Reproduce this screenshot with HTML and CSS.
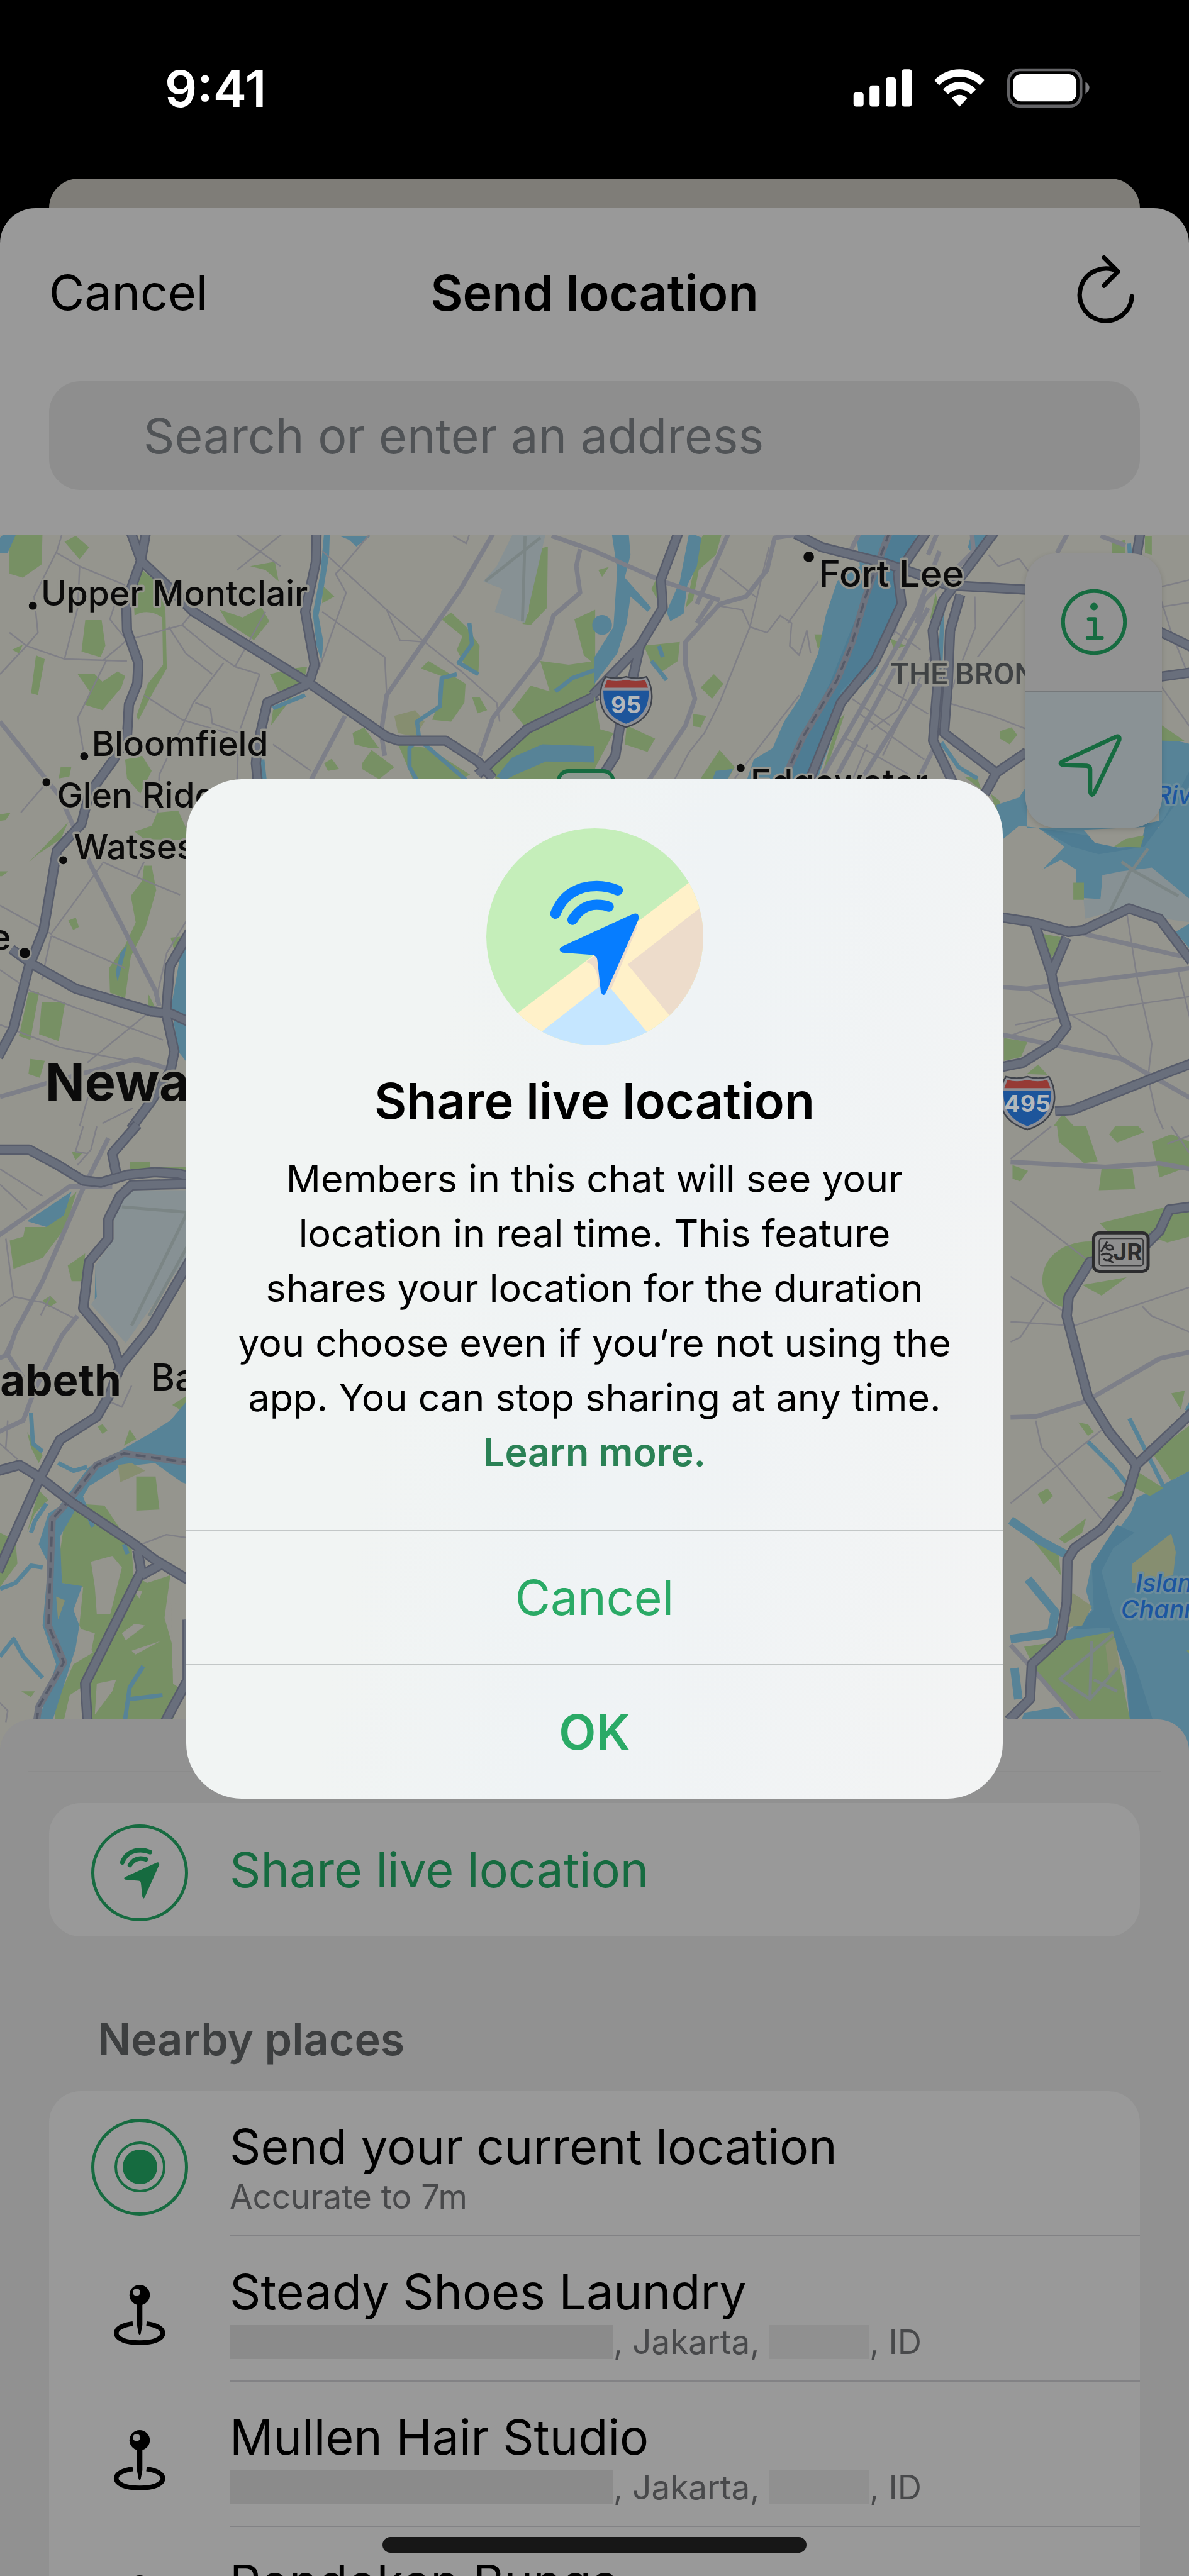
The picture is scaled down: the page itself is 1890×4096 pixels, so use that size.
FILE: index.html
```
<!DOCTYPE html>
<html lang="en">
<head>
  <meta charset="utf-8">
  <title>Send location</title>
  <link rel="stylesheet" href="styles.css">
</head>
<body>
  <!-- shared shapes -->
  <svg class="sprite" aria-hidden="true">
    <symbol id="live" viewBox="320 360 440 570">
      <path fill="none" stroke="currentColor" stroke-width="50" stroke-linecap="round" d="M350 527C385 435 460 393 550 393C590 393 625 402 652 414M433 557C465 505 505 484 550 484C575 484 595 487 608 493"/>
      <path fill="currentColor" d="M378 688L728 528Q756 520 754 552L597 905Q583 937 570 905L553 750Q548 728 525 727L385 716Q360 706 378 688Z"/>
    </symbol>
    <symbol id="pin" viewBox="160 868 254 297">
      <circle cx="287" cy="920" r="49"/>
      <circle cx="272" cy="907" r="18" fill="#999"/>
      <path d="M274 960H300V1065L292 1106Q287 1118 282 1106L274 1065Z"/>
      <path fill="none" stroke="#000" stroke-width="23" d="M254 1058C205 1064 174 1082 174 1104C174 1132 222 1150 287 1150C352 1150 399 1132 399 1104C399 1082 368 1064 320 1058"/>
    </symbol>
    <symbol id="shield" viewBox="0 0 144 140">
      <path fill="#8d8f95" stroke="#3f434b" stroke-width="4" d="M18 4Q45 12 72 4Q99 12 126 4Q142 30 140 62Q136 118 72 137Q8 118 4 62Q2 30 18 4Z"/>
      <path fill="#963a35" d="M22 12Q45 19 72 12Q99 19 122 12L130 33H14Z"/>
      <path fill="#1d559b" d="M12 40H132Q134 108 72 128Q10 108 12 40Z"/>
    </symbol>
  </svg>

  <header class="status">
    <time>9:41</time>
    <svg class="status-icons" viewBox="50 90 1156 196" aria-hidden="true">
      <g fill="#fff">
        <rect x="53" y="209" width="49" height="69" rx="13"/>
        <rect x="131" y="175" width="49" height="103" rx="13"/>
        <rect x="210" y="136" width="49" height="142" rx="13"/>
        <rect x="288" y="97" width="49" height="181" rx="13"/>
        <path d="M446 150Q500 97 569 97Q638 97 691 150L668 174Q625 133 569 133Q513 133 470 174Z"/>
        <path d="M489 194Q523 158 569 158Q615 158 649 194L625 219Q601 194 569 194Q537 194 513 219Z"/>
        <path d="M532 238Q548 221 569 221Q590 221 606 238L569 278Z"/>
        <rect x="830" y="121" width="308" height="132" rx="38"/>
      </g>
      <rect x="808" y="99" width="352" height="177" rx="54" fill="none" stroke="#636366" stroke-width="14"/>
      <path fill="#7c7c7f" d="M1182 157Q1201 168 1201 186Q1201 204 1182 216Z"/>
    </svg>
  </header>

  <div class="behind"></div>
  <main class="sheet">
    <div class="bar">
      <button class="bar-cancel">Cancel</button>
      <h1>Send location</h1>
      <button class="bar-refresh" aria-label="Refresh">
        <svg viewBox="1130 985 312 350"><path fill="none" stroke="#000" stroke-width="22" stroke-linecap="round" stroke-linejoin="round" d="M1403 1190A127 127 0 1 1 1335 1069M1267 1001L1335 1069L1267 1138"/></svg>
      </button>
    </div>
    <input class="search" type="text" placeholder="Search or enter an address" aria-label="Search or enter an address">

    <section class="map">
      <svg class="map-art" viewBox="0 865 1920 1970">
        <defs>
          <g id="hwy-nw">
            <path d="M345 0L372 75L333 185L335 260L365 345L362 400L340 455L335 540L300 600L235 690L215 770L150 840L115 1050L75 1150L35 1310L-5 1385"/>
            <path d="M385 0L372 75L440 140L510 210L810 395L1020 540L1050 550L1175 550L1260 605L1300 650"/>
            <path d="M835 0L833 80L805 210L830 350L815 400L705 450L680 560L675 610L680 660"/>
            <path d="M1260 640L1390 520L1575 430"/>
            <path d="M30 1100L85 1140L200 1205L400 1265L450 1270L500 1293"/>
            <path d="M500 1055L448 1145L438 1270L460 1370L450 1420L400 1500L345 1575"/>
          </g>
          <g id="hwy-ne">
            <path d="M222 0L175 125L180 200L120 300L-5 430M120 300L100 390M68 505L55 590L20 645"/>
            <path d="M530 5L600 40L760 80L850 110L930 140L1140 152"/>
            <path d="M875 0L800 110L810 190L740 340L650 450L565 660"/>
            <path d="M1055 0L920 180L892 260L905 400L893 550L945 660M965 165L938 260L932 400L922 530L1060 635L1140 580M1060 635L1030 690"/>
            <path d="M1440 0L1430 60M1490 262L1575 303M1490 382L1575 370"/>
            <path d="M1070 1016L1160 1030L1250 1055L1290 1050L1410 993L1490 1020L1575 1133"/>
            <path d="M1160 1030L1205 1165L1215 1215L1245 1305L1210 1350L1130 1400L1070 1412M1245 1070L1205 1165"/>
            <path d="M1215 1528L1260 1525L1500 1430L1575 1402"/>
          </g>
          <g id="hwy-sw">
            <path d="M-5 60L75 60L150 100L215 140L260 145L330 125L400 118L460 122L500 132"/>
            <path d="M300 120L290 70L355 -5M500 148L340 152L310 180L280 240L280 290L230 350L215 470L290 560L310 620L390 520L500 330"/>
            <path d="M310 620L285 690L250 750L155 810L100 915L-5 1150"/>
            <path d="M-5 890L50 875L100 905L190 975L340 1075L400 1120L500 1180"/>
            <path d="M355 1095L365 1150L220 1440L230 1600M420 1130L365 1160M485 1275L485 1430L430 1532L400 1600"/>
          </g>
          <g id="hwy-se">
            <path d="M1575 203L1485 215L1460 270L1400 330L1280 350L1225 440L1220 490L1275 700L1330 790L1400 875L1575 710"/>
            <path d="M1400 875L1375 960L1310 1040L1240 1090L1222 1120L1220 1230L1205 1320L1130 1390L1125 1480L1070 1535"/>
          </g>
        </defs>
        <rect class="land" y="865" width="1920" height="1970"/>

        <!-- Montclair, Bloomfield, Newark -->
        <g transform="translate(0 860) scale(.6122)">
          <g class="park">
            <path d="M25 0H112L110 85L60 120L25 110ZM170 25L200 10L235 40L210 72ZM375 100L435 150L440 360L405 420L365 497L360 485L390 400L430 350L428 225Q390 200 355 220L350 140Z"/>
            <path d="M225 232L268 232L278 300L265 330L215 315ZM95 325L118 335L100 430L82 425ZM205 375L250 375L270 395L310 368L330 380L320 410L270 470L222 455L240 425ZM32 310L60 297L50 320Z"/>
            <path d="M660 90L725 78L735 130L700 100ZM580 205L640 225L690 198L710 235L670 285L600 240ZM850 140L882 170L850 188ZM712 375L770 360L810 355L800 400L735 420ZM720 470L775 430L715 510Z"/>
            <path d="M1165 230L1190 212L1230 250L1265 300L1262 370L1225 350L1205 310L1220 275ZM1110 360L1130 340L1180 370L1228 400L1225 450L1190 500L1140 495L1165 430L1165 380ZM1245 435L1265 435L1285 470L1260 478Z"/>
            <path d="M930 530L960 515L1000 570L975 570L935 560ZM955 610L980 575L1040 620L1000 652L955 625ZM1050 560L1130 570L1240 640L1210 655H1090ZM855 610L875 598L895 625L865 630Z"/>
            <path d="M1400 50L1445 38L1443 200L1400 245L1378 242L1395 210ZM1515 230L1570 205V350L1540 325ZM1425 340L1500 350L1570 340V655H1310L1290 620L1390 520L1350 470L1400 405L1450 420Z"/>
            <path d="M160 620H188L183 645L155 650ZM330 600L375 590L400 630L370 690L335 650ZM415 740L470 735L495 790V812L380 810L355 790L400 775ZM180 765L75 872L100 850L160 810Z"/>
            <path d="M380 880H400L412 945L385 1040L345 1120L330 1230L290 1215L288 1150L330 1090L358 1030L345 960L375 920ZM180 1025L200 1017L208 1042L193 1050ZM110 1240L172 1240L155 1343L103 1325ZM75 1215H103L80 1340L50 1330ZM80 1390L118 1395L105 1440L75 1430Z"/>
            <path d="M450 1070L490 1066L460 1105ZM392 1220L415 1265L390 1250ZM0 745L28 740L15 760L0 762ZM0 895H22L5 908H0Z"/>
          </g>
          <path class="sand" d="M1040 485L1095 470L1120 500L1095 540L1050 530Z"/>
          <g class="water">
            <path d="M0 15L15 0H45L20 55H0ZM855 0H870L868 60L850 170L840 220L853 290L848 340L835 300L825 215L845 110ZM895 10H978L940 38L920 20ZM1310 645L1350 595L1430 560L1575 565V608L1440 605L1360 640L1330 655ZM495 1060V1402L470 1370L452 1250L475 1120ZM335 1090L320 1150L310 1185L305 1160L318 1110Z"/>
          </g>
          <path class="creek" d="M1238 240L1245 295L1210 345L1262 375M1205 375L1165 385L1160 460L1100 500L1105 540L1080 570L1080 620L1100 655M1120 560L1230 655M1465 420L1510 385L1575 362M692 600L698 655M805 430L720 465"/>
          <path class="airport" d="M1355 0H1440L1385 240L1305 210L1325 150L1275 130L1310 90Z"/>
          <path class="runway" d="M1385 10L1378 235M1280 130L1425 15"/>
          <g class="street">
            <path d="M150 50L90 170L100 265L70 300L0 375M25 265L70 300L170 335L335 340M170 335L205 200L210 90L150 55M210 90L330 140M270 340L335 285L480 245L510 210M280 340L205 490L222 590M615 0L740 90M625 100L750 0"/>
            <path d="M480 245L570 320L620 355L685 375L630 530L625 655M700 210L620 355M590 345L510 450L420 640L415 740M445 250L490 320L560 375M380 430L480 495L600 530M515 450L555 465L560 505L630 530M850 50L900 95L1020 205L1120 290L1220 370L1310 450L1318 500"/>
            <path d="M900 95L885 110L913 160L840 365M850 210L1015 330L1020 430M1020 205L1055 285L1120 290M900 95L980 0M720 560L820 630M165 0L150 50M290 230L320 140M290 230L330 280M1195 10L1230 30L1240 0"/>
            <path d="M135 1065L330 1150M0 985L135 1060L270 875M0 1155L80 1210L430 1340M0 1300L160 1360L390 1405M230 1400L420 1245M270 870L360 910L475 957M55 740L115 670M210 1568L235 1480L280 1465M270 1560L350 1520M380 870L360 910M340 710L410 740M135 1065L110 1180M495 1020L440 1110L410 1240"/>
          </g>
          <path class="road" d="M1303 0L1215 150L1020 430L1005 530L1015 590M1455 10L1575 52M1530 45L1520 90L1530 160L1460 220L1425 330L1300 490L1265 590M910 485L820 655M0 500L120 650L160 700L240 880L410 1210L420 1250M0 1490L120 1455L360 1390L440 1415"/>
          <use href="#hwy-nw" class="hwy-edge"/>
          <use href="#hwy-nw" class="hwy"/>
        </g>

        <!-- Hudson, Manhattan, Bronx -->
        <g transform="translate(960 860) scale(.6122)">
          <g class="park">
            <path d="M280 20L290 0H337L320 60L275 100L260 180L240 200ZM170 110L190 220L150 150ZM130 300L225 290L220 340L175 370L150 345ZM85 510L160 545L140 580L80 560ZM0 430L15 520L50 530L0 625ZM280 410L315 375L340 400L310 440ZM260 480L295 485L280 515L260 512ZM280 650L330 575L370 620L350 655ZM1070 525L1100 515L1115 535L1095 560L1070 545ZM580 270H608L590 310ZM10 100L38 92L20 118Z"/>
            <path d="M1365 30L1400 20V55H1365ZM1452 10H1470V60L1452 55ZM780 280L820 300L790 310ZM900 160L910 210L885 230ZM640 500L660 480L620 600L600 640ZM975 645L1010 650L1020 680ZM1045 690L1070 710L1065 750ZM1180 1060L1240 1070L1205 1125ZM1080 1335L1142 1345L1125 1385L1080 1395ZM1140 1430L1170 1405L1195 1432ZM1210 1568L1235 1535L1265 1568Z"/>
          </g>
          <g class="water">
            <path d="M690 0H880L800 100L815 200L740 370L660 450L585 660H400L420 600L470 570L500 500L540 440L590 320L610 220L640 130L700 90Z"/>
            <path d="M45 0H90L95 60L80 120L150 200L140 210L95 170L85 240L60 320L0 400V330L50 250L60 100ZM250 0L282 15L270 90L245 140L235 215L200 235L190 210L225 130Z"/>
            <circle cx="20" cy="245" r="26"/>
            <path d="M1140 670L1120 700L1060 720L1075 812L1120 775L1170 780L1240 830L1182 890L1230 865L1270 890L1270 965L1335 968L1340 905L1400 900L1575 985V560L1490 540V780L1140 780ZM1575 1030L1532 1055L1575 1105ZM995 0H1045L1000 60L985 40ZM320 630L365 625L350 655H310Z"/>
          </g>
          <path class="deep" d="M790 0H850L770 300L650 420L560 660H490L620 400L700 200ZM1170 780L1260 830L1330 850L1450 830L1575 660V620L1500 760L1300 800Z"/>
          <path class="creek" d="M918 200L912 360M915 555L960 620L1010 650M150 340L190 390M170 300L180 330M1410 30L1412 55"/>
          <path class="land" d="M1290 785L1452 778L1440 830L1380 832L1320 820Z"/>
          <path class="park" d="M1370 830L1400 810L1450 800L1440 832ZM1263 925H1291V970H1263ZM1490 505L1558 552L1490 550Z"/>
          <path class="airport" d="M1340 905L1390 895L1470 885L1575 972V1030L1500 1020L1410 985L1370 1000L1295 1020L1290 970L1335 968Z"/>
          <path class="runway" d="M1390 870L1420 890L1460 835M1360 1000L1415 890L1540 960"/>
          <g class="street">
            <path d="M330 95L430 175M460 40L410 250L455 265L490 220L520 240L515 300L540 325L560 260L570 320M410 250L330 450L290 530L250 580L210 655M330 195L390 205L410 250M540 430L370 650M590 130L510 240M700 480L870 600M655 540L830 640M750 400L880 480M790 260L860 310M680 440L780 510M720 560L680 655M820 180L790 270M850 350L800 470L730 520M900 300L760 590"/>
            <path d="M1003 170L1005 250L970 340L930 450L1050 485L1140 520M1130 180L1010 330M1490 165L1520 260L1575 400M1490 145L1575 125M1490 198L1575 185M1490 400L1575 520M1040 60L1065 90L1120 70L1150 110"/>
            <path d="M1405 1010L1430 1170L1470 1350L1460 1440L1480 1530L1500 1575M1110 1300L1400 1250L1575 1225M1540 1160L1575 1300M1150 1210L1350 1330L1400 1400M1080 1335L1230 1280"/>
          </g>
          <path class="road" d="M355 0L270 190M0 50L180 130L330 180M540 5L475 15L455 100L400 170L330 190L240 290L240 350L265 440L240 510L140 660M310 180L270 240M905 0L880 60M995 0L1000 50L870 180L850 240M910 50L850 210L600 645M880 200L630 660M860 400L700 660M700 0L670 60M1250 0L1220 55M1335 10L1400 35M900 560L850 660M1070 1200L1140 1205L1575 1150M1290 1060L1575 1125M1070 1325L1220 1355L1390 1390L1575 1495"/>
          <path class="ferry" d="M778 0L715 170L680 290L640 390L550 540L505 640"/>
          <path class="ferry-dash" d="M778 0L715 170L680 290L640 390L550 540L505 640"/>
          <use href="#hwy-ne" class="hwy-edge"/>
          <use href="#hwy-ne" class="hwy"/>
        </g>

        <!-- Elizabeth, Bayonne, Staten Island -->
        <g transform="translate(0 1820) scale(.625)">
          <path class="park" d="M165 200L198 168L170 260L110 340L35 368L25 295L60 285L65 260L120 260ZM175 360L220 328L215 400L185 400ZM185 65L212 70L195 87ZM335 92H388V110H335ZM415 105H480V120H415ZM110 450L130 438L147 455L127 467ZM70 790L110 850L100 870L80 830ZM352 905H402L412 990L352 993ZM445 720L492 690L470 735ZM320 825L335 782L352 808ZM252 775L265 770L278 785L265 795ZM100 940L125 965L90 1000L70 1050Z"/>
          <path class="park" d="M170 1000L200 975L270 980L340 1085L345 1160L380 1180L440 1160L425 1270L445 1340L447 1440L475 1460L420 1600H245L225 1440L180 1470L150 1600L140 1500L190 1390L240 1360L205 1290L215 1190L160 1180L155 1100ZM0 1050L40 1070L45 1130L0 1190ZM55 1460H90L80 1475Z"/>
          <path class="land" d="M235 1125L290 1110L315 1140L300 1200L285 1260L250 1260L245 1190ZM195 1295L245 1310L235 1360L200 1360ZM315 1310L348 1285L375 1290L325 1328ZM250 1440L300 1430L290 1460L245 1520ZM345 1200H368L360 1220ZM340 1355L415 1330L350 1365ZM442 1230L480 1240V1430L445 1400Z"/>
          <g class="water">
            <path d="M70 245L185 168L165 230L120 260ZM495 695L440 760L385 795L290 850L230 880L150 985L125 1000L100 1080L125 1130L110 1290L145 1390L80 1600H115L195 1350L205 1290L190 1250L212 1188L160 1180L155 1060L230 930L310 880L400 870L470 920L495 928Z"/>
          </g>
          <path class="sand" d="M305 875L340 870L375 890L310 920ZM145 1215L168 1225L150 1275Z"/>
          <path class="creek" d="M0 1370L35 1325L60 1370L110 1425M0 1195L40 1180L80 1135L110 1140M80 740L85 820L110 840M150 870L190 890L225 880M250 465L252 370L270 350M315 1590L335 1450L370 1395M335 1480L420 1470M120 975L90 1020L80 1050M210 960L240 1035M320 1080L330 1105"/>
          <path class="airport" d="M310 165H495V320L325 560L235 460L250 440L245 360L295 290L295 200Z"/>
          <path class="runway" d="M485 220L340 515M495 290L385 490M315 208L485 222"/>
          <path class="street" d="M215 0L195 65L225 70M0 110L110 180M15 290L35 440L0 465M35 440L110 455L200 500M365 1080L430 1055L495 1065M0 150L70 215M340 670L315 725L280 710M40 530L10 590M250 0L235 60L200 100M20 760L15 830M0 820L45 860M130 440L105 488M0 1490L20 1510L15 1540"/>
          <path class="road" d="M-5 283L180 155L290 155M280 30L210 170L110 400L40 530L20 590L60 650M200 490L160 540L90 680L60 760L-5 790M-5 600L20 590"/>
          <path class="ferry" d="M495 870L320 845L250 875L180 965L135 1015L125 1290L165 1385L100 1500L85 1600"/>
          <path class="ferry-dash" d="M495 870L320 845L250 875L180 965L135 1015L125 1290L165 1385L100 1500L85 1600"/>
          <use href="#hwy-sw" class="hwy-edge"/>
          <use href="#hwy-sw" class="hwy"/>
        </g>

        <!-- Queens, Jamaica Bay -->
        <g transform="translate(960 1820) scale(.625)">
          <path class="water" d="M1575 870L1490 915L1400 960L1385 1000L1340 1060L1285 1130L1270 1200L1285 1250L1240 1290L1180 1350L1340 1305L1370 1400L1390 1620H1575ZM1110 1515L1200 1500L1240 1540V1600H1080Z"/>
          <path class="deep" d="M1350 1030L1395 1050L1340 1090L1310 1150L1340 1260L1400 1400L1470 1620H1390L1375 1420L1330 1295L1240 1300L1290 1250L1285 1130Z"/>
          <g class="park">
            <path d="M1195 0H1270L1300 90L1265 95L1200 40ZM1330 20L1345 0H1405L1420 15L1350 42ZM1440 40L1490 20L1540 40L1545 100L1460 132ZM1310 110H1390L1397 162L1303 165ZM1080 100L1120 115L1100 142L1080 135ZM1305 250L1470 210L1575 215V275L1480 300L1440 285L1330 275ZM1300 298C1200 290 1150 350 1158 410C1165 450 1200 470 1215 465L1230 420L1280 350ZM1260 410L1375 390L1310 437ZM1250 765L1275 770L1290 790L1275 800ZM1145 950L1170 935L1185 955L1160 977ZM1490 690L1525 683L1515 732ZM1575 745V870L1490 915L1445 850L1420 860ZM1400 890L1470 935L1435 955L1390 930ZM1200 1065L1270 1013L1260 1050L1215 1078ZM1325 960L1365 940V972ZM1110 1345L1210 1330L1340 1305L1355 1390L1397 1600H1290L1240 1532L1150 1430ZM1530 1355L1575 1335V1405ZM1085 1010L1200 1110L1205 1160Z"/>
          </g>
          <path class="sand" d="M1390 1130L1490 1052L1502 1100L1495 1160L1420 1180L1388 1180ZM1235 1205L1285 1240L1260 1290L1215 1295ZM1320 1340L1345 1320L1358 1400L1330 1420Z"/>
          <path class="creek wide" d="M1075 1018L1150 1070L1225 1110M1120 1170L1190 1255L1180 1310L1075 1325M1085 1400L1095 1480"/>
          <path class="creek" d="M1275 815L1340 880L1380 930M1382 755L1420 830L1470 930M1530 735L1557 688"/>
          <path class="runway" d="M1200 1430L1340 1312M1285 1330L1280 1480M1205 1430L1280 1480L1350 1400M1290 1430L1350 1460"/>
          <path class="street" d="M1075 84L1180 0M1490 0L1545 80L1565 190L1575 200M1075 193L1280 350M1075 388L1215 480M1075 505L1240 515L1575 403M1415 465L1440 490L1575 547M1160 455L1100 545L1075 557M1140 760L1155 830L1310 1015M1075 974L1310 785M1480 45L1575 10"/>
          <path class="road" d="M1075 92L1320 105L1460 95L1575 117M1075 752L1140 750L1270 710L1460 600L1575 575M1075 1340L1130 1400L1270 1560"/>
          <use href="#hwy-se" class="hwy-edge"/>
          <use href="#hwy-se" class="hwy"/>
        </g>

        <!-- road signs -->
        <rect x="902" y="1246" width="88" height="60" rx="16" fill="#8d9990" stroke="#166b40" stroke-width="6"/>
        <use href="#shield" x="967" y="1091" width="88" height="86"/>
        <text class="sign" x="1011" y="1152">95</text>
        <use href="#shield" x="1608" y="1737" width="102" height="90"/>
        <text class="sign" x="1659" y="1797">495</text>
        <rect x="1766" y="1992" width="88" height="62" rx="9" fill="#8f8f8f" stroke="#2c2c2e" stroke-width="5"/>
        <rect x="1775" y="2001" width="71" height="44" rx="4" fill="none" stroke="#3a3a3c" stroke-width="2"/>
        <path fill="none" stroke="#2c2c2e" stroke-width="3" d="M1778 2022L1788 2006M1786 2014Q1796 2008 1797 2018Q1788 2022 1786 2014M1778 2028Q1788 2022 1796 2030Q1790 2040 1782 2034M1790 2036L1798 2040"/>
        <text class="sign-dark" x="1821" y="2036">JR</text>

        <!-- place names -->
        <g class="dots">
          <circle cx="53" cy="979" r="8"/><circle cx="136" cy="1222" r="8"/><circle cx="75" cy="1264" r="8"/>
          <circle cx="102" cy="1390" r="8"/><circle cx="40" cy="1540" r="10"/><circle cx="1306" cy="900" r="10"/><circle cx="1196" cy="1241" r="8"/>
        </g>
        <g class="names">
          <text class="town" x="66" y="979">Upper Montclair</text>
          <text class="town" x="148" y="1222">Bloomfield</text>
          <text class="town" x="92" y="1305">Glen Ridge</text>
          <text class="town" x="119" y="1388">Watsessing</text>
          <text class="town" x="1212" y="1284">Edgewater</text>
          <text class="town big" x="1322" y="948">Fort Lee</text>
          <text class="town big" x="18" y="1535" text-anchor="end">Orange</text>
          <text class="town big" x="243" y="2247">Bayonne</text>
          <text class="city" x="73" y="1778">Newark</text>
          <text class="city small" x="196" y="2255" text-anchor="end">Elizabeth</text>
          <text class="borough" x="1438" y="1106">THE BRONX</text>
        </g>
        <g class="names sea">
          <text x="1866" y="1299">River</text>
          <text x="1834" y="2572">Island</text>
          <text x="1810" y="2614">Channel</text>
        </g>
      </svg>
      <div class="map-controls">
        <button aria-label="Map info">
          <svg viewBox="1216 135 200 200"><circle cx="1316" cy="235" r="82" fill="none" stroke="currentColor" stroke-width="10"/><circle cx="1316" cy="194" r="10" fill="currentColor"/><path fill="none" stroke="currentColor" stroke-width="10" stroke-linecap="round" stroke-linejoin="round" d="M1302 227H1319V277M1299 277H1337"/></svg>
        </button>
        <button aria-label="My location">
          <svg viewBox="1216 498 200 200"><path fill="none" stroke="currentColor" stroke-width="11" stroke-linejoin="round" d="M1374 537L1232 603Q1222 609 1234 612L1297 614Q1306 615 1306 624V684Q1310 697 1317 685L1383 546Q1385 533 1374 537Z"/></svg>
        </button>
      </div>
    </section>

    <section class="places">
      <div class="grabber"></div>
      <button class="card share">
        <span class="ring"><svg class="live"><use href="#live"/></svg></span>
        Share live location
      </button>
      <h2>Nearby places</h2>
      <ul class="card list">
        <li>
          <span class="ring"><span class="target"></span></span>
          <div class="info"><h3>Send your current location</h3><p>Accurate to 7m</p></div>
        </li>
        <li>
          <svg class="pin"><use href="#pin"/></svg>
          <div class="info"><h3>Steady Shoes Laundry</h3><p><i class="redacted street-name"></i>, Jakarta, <i class="redacted zip"></i>, ID</p></div>
        </li>
        <li>
          <svg class="pin"><use href="#pin"/></svg>
          <div class="info"><h3>Mullen Hair Studio</h3><p><i class="redacted street-name"></i>, Jakarta, <i class="redacted zip"></i>, ID</p></div>
        </li>
        <li>
          <svg class="pin"><use href="#pin"/></svg>
          <div class="info"><h3>Pondokan Bunga</h3></div>
        </li>
      </ul>
    </section>
  </main>

  <div class="home"></div>

  <div class="overlay">
    <div class="dialog" role="dialog" aria-labelledby="dialog-title">
      <svg class="art" viewBox="15 113 1052 1052" aria-hidden="true">
        <clipPath id="disc"><circle cx="541" cy="639" r="526"/></clipPath>
        <g clip-path="url(#disc)">
          <path fill="#c5eeba" d="M0 100H1100V1200H0Z"/>
          <path fill="#fff1c9" d="M150 1022L1020 359L1120 450L1120 1200H150Z"/>
          <path fill="#eddccb" d="M1100 461L700 773L940 1066L1100 1066Z"/>
          <path fill="#c5e6ff" d="M240 1133L592 857L850 1169V1200H240Z"/>
          <path fill="#eddccb" d="M498 762L532 737L600 700L745 570L748 590L622 888L597 905L560 880Q556 775 498 762Z"/>
        </g>
        <use href="#live" x="320" y="360" width="440" height="570" color="#067dff"/>
      </svg>
      <h2 id="dialog-title">Share live location</h2>
      <p>Members in this chat will see your<br>location in real time. This feature<br>shares your location for the duration<br>you choose even if you’re not using the<br>app. You can stop sharing at any time.<br><a href="#">Learn more.</a></p>
      <button>Cancel</button>
      <button class="ok">OK</button>
    </div>
  </div>
</body>
</html>
```
FILE: styles.css
```
* {
    box-sizing: border-box;
    margin: 0;
    padding: 0;
}
body {
    height: 100vh;
    overflow: hidden;
    position: relative;
    background: #000;
    color: #000;
    font-family: Inter, "Liberation Sans", sans-serif;
    font-size: 77px;
}
button {
    background: none;
    border: 0;
    font: inherit;
    color: inherit;
}
svg {
    display: block;
}
.sprite {
    position: absolute;
    width: 0;
    height: 0;
}

/* status bar */
.status {
    display: flex;
    justify-content: space-between;
    align-items: center;
    height: 284px;
    padding: 0 156px 4px 262px;
    color: #fff;
    font-size: 80px;
    font-weight: 600;
}
.status-icons {
    width: 379px;
    height: 64px;
}

/* sheets */
.behind {
    height: 47px;
    margin: 0 78px;
    background: #7f7d78;
    border-radius: 50px 50px 0 0;
}
.sheet {
    background: #999;
    border-radius: 56px 56px 0 0;
}
.bar {
    display: grid;
    grid-template-columns: 1fr auto 1fr;
    align-items: center;
    height: 268px;
    margin-bottom: 7px;
    padding: 0 78px;
}
.bar h1 {
    font-size: 79px;
    font-weight: 600;
}
.bar-cancel {
    justify-self: start;
}
.bar-refresh {
    justify-self: end;
    padding-bottom: 8px;
}
.bar-refresh svg {
    width: 102px;
    height: 115px;
}
.search {
    display: block;
    width: calc(100% - 156px);
    height: 173px;
    margin: 0 78px 72px;
    padding: 0 150px;
    border: 0;
    border-radius: 50px;
    background: #8e8e8e;
    font: inherit;
}
.search::placeholder {
    color: #505356;
    opacity: 1;
}

/* map */
.map {
    position: relative;
    overflow: hidden;
}
.map-art {
    width: 100%;
}
.land { fill: #95958e; }
.water { fill: #578397; }
.deep { fill: #4e7c93; }
.park { fill: #779064; }
.sand { fill: #868e70; }
.airport { fill: #879194; }
.runway,
.creek,
.street,
.road,
.ferry,
.ferry-dash,
.hwy,
.hwy-edge {
    fill: none;
    stroke-linejoin: round;
}
.runway { stroke: #7b8585; stroke-width: 8; }
.creek { stroke: #578397; stroke-width: 11; }
.creek.wide { stroke-width: 22; }
.street { stroke: #7f7f86; stroke-width: 4; }
.road { stroke: #7d7f88; stroke-width: 12; }
.ferry { stroke: #6e737e; stroke-width: 18; }
.ferry-dash { stroke: #565b69; stroke-width: 6; stroke-dasharray: 26 14; }
.hwy-edge { stroke: #575c6b; stroke-width: 27; }
.hwy { stroke: #696f7c; stroke-width: 19; }
.dots {
    fill: #0b0b0b;
    stroke: #95958e;
    stroke-width: 3;
}
.names text {
    fill: #0b0b0b;
    stroke: #95958e;
    stroke-width: 7;
    stroke-linejoin: round;
    paint-order: stroke;
}
.names .town { font-size: 56px; font-weight: 500; }
.names .town.big { font-size: 60px; }
.names .city { font-size: 84px; font-weight: 700; }
.names .city.small { font-size: 70px; }
.names .borough {
    fill: #3f4244;
    font-family: Roboto, "Liberation Sans", sans-serif;
    font-size: 49px;
    font-weight: 500;
}
.names.sea text {
    fill: #1c56a0;
    stroke: #6d8d9b;
    font-size: 40px;
    font-weight: 500;
    font-style: italic;
}
.sign,
.sign-dark {
    fill: #b5b8bb;
    font-size: 38px;
    font-weight: 700;
    text-anchor: middle;
}
.sign-dark {
    fill: #2c2c2e;
}
.map-controls {
    position: absolute;
    top: 29px;
    right: 43px;
    width: 217px;
    border-radius: 48px;
    overflow: hidden;
    background: #929292;
    color: #166b40;
    box-shadow: 0 3px 8px rgba(0, 0, 0, .15);
}
.map-controls button {
    display: flex;
    align-items: center;
    justify-content: center;
    width: 100%;
    height: 218px;
}
.map-controls button + button {
    background: #8a9295;
    border-top: 2px solid #75787a;
}
.map-controls svg {
    width: 120px;
    height: 120px;
}

/* list under the map */
.places {
    position: relative;
    margin-top: -56px;
    padding: 0 78px;
    background: #919191;
    border-radius: 50px 50px 0 0;
}
.grabber {
    height: 84px;
    margin: 0 -34px 49px;
    border-bottom: 2px solid #8c8c8c;
}
.card {
    width: 100%;
    background: #999;
    border-radius: 50px;
}
.share {
    display: flex;
    align-items: center;
    gap: 66px;
    height: 212px;
    padding: 0 67px;
    color: #166b40;
}
.ring {
    display: flex;
    align-items: center;
    justify-content: center;
    flex: none;
    width: 154px;
    height: 154px;
    margin-top: 10px;
    border: 5px solid #166b40;
    border-radius: 50%;
    color: #166b40;
}
.live {
    width: 64px;
    height: 83px;
}
.target {
    width: 81px;
    height: 81px;
    padding: 9px;
    border: 4px solid #166b40;
    border-radius: 50%;
    background: #166b40 content-box;
}
.places h2 {
    margin: 119px 77px 37px;
    color: #3d3f40;
    font-size: 70px;
    font-weight: 600;
    line-height: 90px;
}
.list {
    list-style: none;
}
.list li {
    display: flex;
    align-items: center;
    gap: 66px;
    height: 231px;
    padding-left: 67px;
}
.pin {
    flex: none;
    width: 154px;
    height: 98px;
    margin-top: 18px;
}
.info {
    flex: 1;
    height: 231px;
    padding-top: 40px;
    border-bottom: 2px solid #828285;
}
.info h3 {
    font-size: 77px;
    font-weight: 400;
    line-height: 96px;
}
.info p {
    display: flex;
    align-items: center;
    color: #48494b;
    font-size: 53px;
    line-height: 64px;
    white-space: pre;
}
.redacted {
    height: 54px;
    background: #8b8b8b;
}
.street-name {
    width: 610px;
}
.zip {
    width: 160px;
    background: #909090;
}
.home {
    position: absolute;
    bottom: 37px;
    left: 50%;
    width: 674px;
    height: 25px;
    margin-left: -337px;
    border-radius: 13px;
    background: #171717;
}

/* alert */
.overlay {
    position: absolute;
    inset: 0;
    display: flex;
    align-items: center;
    justify-content: center;
    padding-top: 2px;
}
.dialog {
    width: 1298px;
    padding-top: 78px;
    border-radius: 88px;
    overflow: hidden;
    background: linear-gradient(100deg, #f1f4f3 30%, #eff3f5 55%, #f3f4f4);
    text-align: center;
}
.art {
    width: 345px;
    height: 345px;
    margin: 0 auto 38px;
}
.dialog h2 {
    font-size: 79px;
    font-weight: 600;
    line-height: 100px;
}
.dialog p {
    margin: 31px 0 79px;
    font-size: 61px;
    line-height: 87px;
}
.dialog a {
    color: #2a8155;
    font-weight: 600;
    text-decoration: none;
}
.dialog button {
    display: block;
    width: 100%;
    height: 214px;
    border-top: 2px solid #c3c7c7;
    color: #2aaa66;
}
.dialog .ok {
    font-weight: 600;
}
```
